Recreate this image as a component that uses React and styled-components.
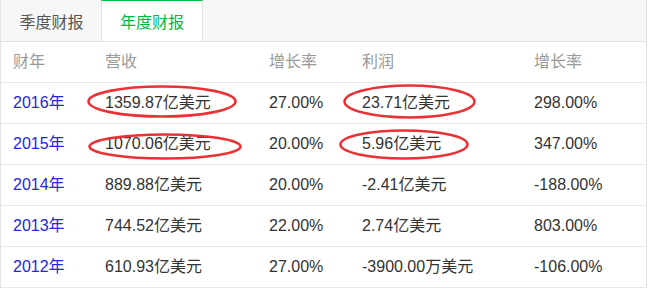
import React from 'react';
import styled, { createGlobalStyle } from 'styled-components';

const rows = [
    { year: '2016年', revenue: '1359.87亿美元', revGrowth: '27.00%', profit: '23.71亿美元', profitGrowth: '298.00%',
        revMark: { x: -18, y: 2, w: 150, h: 33 }, profitMark: { x: -19, y: 1, w: 133, h: 35 } },
    { year: '2015年', revenue: '1070.06亿美元', revGrowth: '20.00%', profit: '5.96亿美元', profitGrowth: '347.00%',
        revMark: { x: -17, y: 9, w: 154, h: 27 }, profitMark: { x: -23, y: 5, w: 130, h: 31 } },
    { year: '2014年', revenue: '889.88亿美元', revGrowth: '20.00%', profit: '-2.41亿美元', profitGrowth: '-188.00%' },
    { year: '2013年', revenue: '744.52亿美元', revGrowth: '22.00%', profit: '2.74亿美元', profitGrowth: '803.00%' },
    { year: '2012年', revenue: '610.93亿美元', revGrowth: '27.00%', profit: '-3900.00万美元', profitGrowth: '-106.00%' },
];

const Mark = ({ mark }) => {
    if (!mark) return null;
    return (
        <Ring $x={mark.x} $y={mark.y} width={mark.w} height={mark.h}>
            <ellipse cx={mark.w / 2} cy={mark.h / 2} rx={mark.w / 2 - 1.5} ry={mark.h / 2 - 1.5}
                fill="none" stroke="#ea3236" strokeWidth="2.6" />
        </Ring>
    );
};

const App = () => {
    return (
        <>
            <GlobalStyle />
            <Panel>
                <TabBar>
                    <Tab>季度财报</Tab>
                    <Tab $active>年度财报</Tab>
                </TabBar>

                <HeadRow>
                    <Cell>财年</Cell>
                    <Cell>营收</Cell>
                    <Cell>增长率</Cell>
                    <Cell>利润</Cell>
                    <Cell>增长率</Cell>
                </HeadRow>

                {rows.map(r => (
                    <Row key={r.year}>
                        <YearLink>{r.year}</YearLink>
                        <Cell>
                            <Mark mark={r.revMark} />
                            {r.revenue}
                        </Cell>
                        <Cell>{r.revGrowth}</Cell>
                        <Cell>
                            <Mark mark={r.profitMark} />
                            {r.profit}
                        </Cell>
                        <Cell>{r.profitGrowth}</Cell>
                    </Row>
                ))}
            </Panel>
        </>
    );
};

const GlobalStyle = createGlobalStyle`
    body {
        margin: 0;
        background: #fff;
        font-family: "Liberation Sans", "Noto Sans CJK SC", sans-serif;
    }
`;

const Panel = styled.div`
    width: 647px;
    box-sizing: border-box;
    border-left: 1px solid #e4e4e4;
    border-right: 1px solid #e4e4e4;
    font-size: 16px;
    color: #333;
`;

const TabBar = styled.div`
    display: flex;
    height: 41px;
    background: #f7f7f7;
    border-bottom: 1px solid #e2e2e2;
`;

const Tab = styled.div`
    box-sizing: border-box;
    width: ${p => (p.$active ? '102px' : '101px')};
    height: 41px;
    display: flex;
    align-items: center;
    justify-content: center;
    color: ${p => (p.$active ? '#00b83f' : '#555')};
    background: ${p => (p.$active ? '#fff' : 'transparent')};
    border-top: ${p => (p.$active ? '1px solid #00b83f' : 'none')};
    border-left: ${p => (p.$active ? '1px solid #e2e2e2' : 'none')};
    border-right: ${p => (p.$active ? '1px solid #e2e2e2' : 'none')};
    margin-left: ${p => (p.$active ? '-1px' : '0')};
`;

const Row = styled.div`
    display: grid;
    grid-template-columns: 92px 164px 93px 172px 1fr;
    padding-left: 12px;
    height: 40px;
    align-items: center;
    border-bottom: 1px solid #e8e8e8;
    white-space: nowrap;
`;

const HeadRow = styled(Row)`
    color: #999;
`;

const Cell = styled.div`
    position: relative;
    height: 40px;
    line-height: 40px;
`;

const YearLink = styled(Cell)`
    color: #2626dc;
`;

const Ring = styled.svg`
    position: absolute;
    left: ${p => p.$x}px;
    top: ${p => p.$y}px;
    overflow: visible;
    pointer-events: none;
`;

export default App;
